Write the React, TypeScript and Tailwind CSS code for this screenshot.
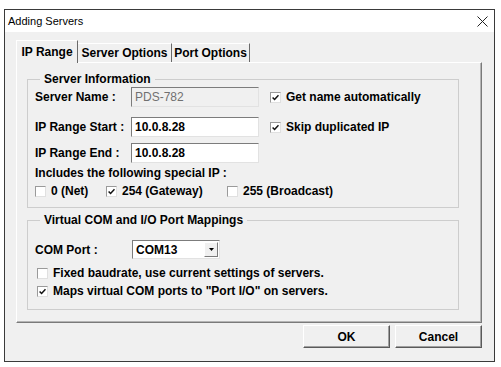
import type { ReactNode } from 'react'

function Check({ checked }: { checked?: boolean }) {
  return (
    <span className="w-[11px] h-[11px] shrink-0 bg-white border border-t-[#9a9a9a] border-l-[#9a9a9a] border-r-[#e0e0e0] border-b-[#e0e0e0] flex items-center justify-center">
      {checked && (
        <svg width="7" height="7" viewBox="0 0 7 7">
          <path d="M0.6 3.4 L2.6 5.5 L6.5 1.2" fill="none" stroke="#111" strokeWidth="1.5" />
        </svg>
      )}
    </span>
  )
}

function CheckLabel({ checked, children, className = '' }: { checked?: boolean; children: ReactNode; className?: string }) {
  return (
    <div className={`flex items-center gap-[5px] h-[14px] ${className}`}>
      <Check checked={checked} />
      <span>{children}</span>
    </div>
  )
}

function TextBox({ value, disabled }: { value: string; disabled?: boolean }) {
  return (
    <div
      className={`w-[128px] h-[20px] border border-t-[#7c7c7c] border-l-[#7c7c7c] border-r-[#e2e2e2] border-b-[#e2e2e2] flex items-center pl-[3px] ${
        disabled ? 'bg-[#f0f0f0] text-[#707070] font-normal' : 'bg-white'
      }`}
    >
      {value}
    </div>
  )
}

function Button({ children }: { children: ReactNode }) {
  return (
    <button className="w-[87px] h-[23px] bg-[#f0f0f0] border border-t-white border-l-white border-r-[#5a5a5a] border-b-[#5a5a5a] shadow-[inset_-1px_-1px_0_#a0a0a0] flex items-center justify-center">
      {children}
    </button>
  )
}

export default function App() {
  return (
    <div className="w-[501px] h-[367px] bg-white pt-[9px] pl-[4px] font-[Liberation_Sans,Arial,sans-serif] text-[12px] leading-[14px] text-black">
      <div className="w-[491px] h-[353px] border border-[#3a3a3a] bg-[#f0f0f0] flex flex-col">
        {/* title bar */}
        <div className="h-[22px] bg-white flex items-center justify-between pl-[3px] pr-[6px]">
          <span className="text-[11px] font-normal">Adding Servers</span>
          <svg width="11" height="11" viewBox="0 0 11 11">
            <path d="M0.5 0.5 L10.5 10.5 M10.5 0.5 L0.5 10.5" stroke="#222" strokeWidth="1" />
          </svg>
        </div>

        <div className="px-[11px] pt-[8px] font-bold">
          {/* tabs */}
          <div className="flex items-end h-[22px] relative z-10">
            <div className="w-[62px] h-[23px] -mb-[1px] bg-[#f0f0f0] border-l border-t border-l-white border-t-white border-r border-r-[#6a6a6a] flex items-center justify-center">
              IP Range
            </div>
            <div className="w-[94px] h-[19px] border-t border-t-white border-r border-r-[#6a6a6a] flex items-center justify-center">
              Server Options
            </div>
            <div className="w-[78px] h-[19px] border-t border-t-white border-r border-r-[#6a6a6a] flex items-center justify-center">
              Port Options
            </div>
          </div>

          {/* panel */}
          <div className="w-[466px] h-[261px] border-l border-t border-l-white border-t-white border-r border-b border-r-[#7a7a7a] border-b-[#7a7a7a]">
            <div className="h-full border-r border-b border-r-[#b5b5b5] border-b-[#b5b5b5] pl-[10px] pt-[9px]">
              <fieldset className="w-[432px] border border-[#cdcdcd] pl-[7px] pb-[9px] flex flex-col">
                <legend className="ml-[5px] px-[4px] h-[14px]">Server Information</legend>
                <div className="flex items-center h-[20px] mt-[1px]">
                  <span className="w-[96px]">Server Name :</span>
                  <TextBox value="PDS-782" disabled />
                  <CheckLabel checked className="ml-[11px]">Get name automatically</CheckLabel>
                </div>
                <div className="flex items-center h-[20px] mt-[10px]">
                  <span className="w-[96px]">IP Range Start :</span>
                  <TextBox value="10.0.8.28" />
                  <CheckLabel checked className="ml-[11px]">Skip duplicated IP</CheckLabel>
                </div>
                <div className="flex items-center h-[20px] mt-[6px]">
                  <span className="w-[96px]">IP Range End :</span>
                  <TextBox value="10.0.8.28" />
                </div>
                <div className="h-[14px] mt-[3px]">Includes the following special IP :</div>
                <div className="flex items-center h-[14px] mt-[4px]">
                  <CheckLabel className="w-[71px]">0 (Net)</CheckLabel>
                  <CheckLabel checked className="w-[121px]">254 (Gateway)</CheckLabel>
                  <CheckLabel>255 (Broadcast)</CheckLabel>
                </div>
              </fieldset>

              <fieldset className="w-[432px] mt-[5px] border border-[#cdcdcd] pl-[7px] pb-[11px] flex flex-col">
                <legend className="ml-[5px] px-[4px] h-[14px]">Virtual COM and I/O Port Mappings</legend>
                <div className="flex items-center h-[19px] mt-[13px]">
                  <span className="w-[97px]">COM Port :</span>
                  <div className="w-[88px] h-[19px] bg-white border border-t-[#7c7c7c] border-l-[#7c7c7c] border-r-[#e2e2e2] border-b-[#e2e2e2] flex items-center">
                    <span className="flex-1 pl-[3px]">COM13</span>
                    <div className="w-[14px] h-[15px] mr-[1px] bg-[#f0f0f0] border border-t-white border-l-white border-r-[#7a7a7a] border-b-[#7a7a7a] flex items-center justify-center">
                      <svg width="5" height="3" viewBox="0 0 5 3">
                        <path d="M0 0 H5 L2.5 3 Z" fill="#000" />
                      </svg>
                    </div>
                  </div>
                </div>
                <CheckLabel className="mt-[7px] ml-[2px]">Fixed baudrate, use current settings of servers.</CheckLabel>
                <CheckLabel checked className="mt-[4px] ml-[2px]">Maps virtual COM ports to "Port I/O" on servers.</CheckLabel>
              </fieldset>
            </div>
          </div>

          {/* buttons */}
          <div className="flex justify-end gap-[5px] mt-[2px] w-[466px]">
            <Button>OK</Button>
            <Button>Cancel</Button>
          </div>
        </div>
      </div>
    </div>
  )
}
